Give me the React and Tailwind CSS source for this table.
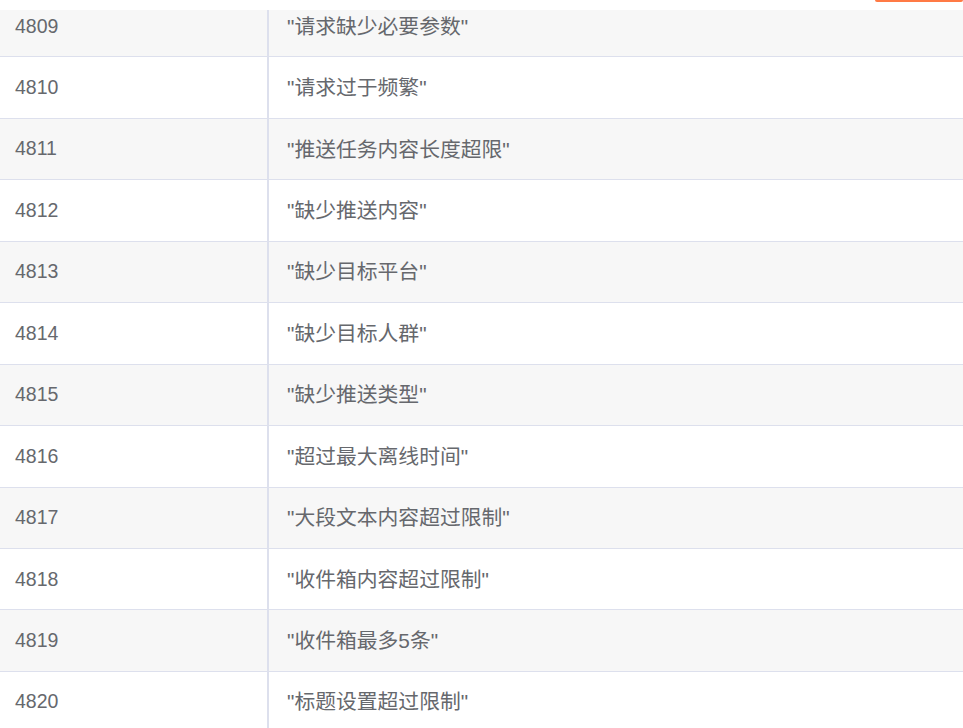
const rows = [
  ['4809', '"请求缺少必要参数"'],
  ['4810', '"请求过于频繁"'],
  ['4811', '"推送任务内容长度超限"'],
  ['4812', '"缺少推送内容"'],
  ['4813', '"缺少目标平台"'],
  ['4814', '"缺少目标人群"'],
  ['4815', '"缺少推送类型"'],
  ['4816', '"超过最大离线时间"'],
  ['4817', '"大段文本内容超过限制"'],
  ['4818', '"收件箱内容超过限制"'],
  ['4819', '"收件箱最多5条"'],
  ['4820', '"标题设置超过限制"'],
];

export default function App() {
  return (
    <div className="w-[963px] h-[728px] bg-white overflow-hidden flex flex-col font-['Liberation_Sans','Noto_Sans_CJK_SC',sans-serif] text-[19.5px] text-[#66686d]">
      {/* top strip with the tab indicator */}
      <div className="h-[10px] shrink-0 flex justify-end relative z-10 bg-white">
        <div className="w-[88px] h-[2px] bg-[#ff7a45] rounded-b-sm" />
      </div>

      {/* scrolled table body */}
      <div className="flex-1 overflow-hidden">
        <div className="-mt-[14px]">
          {rows.map(([code, msg], i) => (
            <div
              key={code}
              className={`flex h-[61.45px] border-b-[1.6px] border-[#dde0ed] ${i % 2 === 0 ? 'bg-[#f7f7f7]' : 'bg-white'}`}
            >
              <div className="w-[269px] shrink-0 flex items-center pl-[15px] border-r-2 border-[#dde0ed]">
                {code}
              </div>
              <div className="flex-1 flex items-center pl-[18px] text-[20.8px]">{msg}</div>
            </div>
          ))}
        </div>
      </div>
    </div>
  );
}
